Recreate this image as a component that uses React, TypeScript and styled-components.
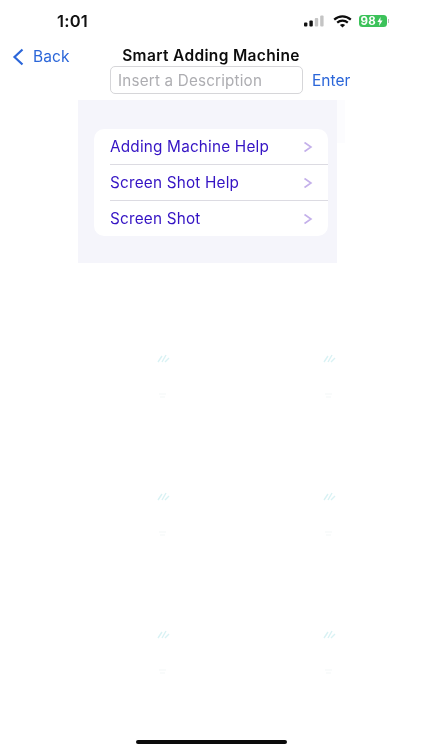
import React from "react";
import styled, { createGlobalStyle } from "styled-components";

const Global = createGlobalStyle`
  html, body { margin: 0; padding: 0; background: #fff; }
  body { font-family: "Inter", "Liberation Sans", sans-serif; }
  * { box-sizing: border-box; }
`;

const Screen = styled.div`
  width: 422px;
  height: 750px;
  position: relative;
  overflow: hidden;
  background: #fff;
  filter: blur(0.4px);
`;

const StatusBar = styled.div`
  height: 44px;
  display: flex;
  align-items: center;
  justify-content: space-between;
  padding: 0 33px 2px 57px;
`;

const Time = styled.div`
  font-size: 16.5px;
  font-weight: 600;
  letter-spacing: 0.2px;
  color: #111;
`;

const StatusIcons = styled.div`
  display: flex;
  align-items: center;
  gap: 7px;
`;

const BatteryWrap = styled.div`
  display: flex;
  align-items: center;
  gap: 1px;
`;

const Battery = styled.div`
  width: 28px;
  height: 12px;
  border-radius: 3.5px;
  background: #3cc25a;
  color: #fff;
  font-size: 11.5px;
  font-weight: 700;
  letter-spacing: 0.3px;
  line-height: 12px;
  padding-left: 2px;
  display: flex;
  align-items: center;
  gap: 1px;
`;

const BatteryCap = styled.div`
  width: 1.5px;
  height: 4px;
  background: #b9b9b9;
`;

const NavBar = styled.div`
  height: 22px;
  position: relative;
  display: flex;
  align-items: center;
  justify-content: center;
  padding-top: 1px;
`;

const BackButton = styled.div`
  position: absolute;
  left: 12px;
  top: 2px;
  height: 21px;
  display: flex;
  align-items: center;
  gap: 9px;
  color: #2b66d9;
  font-size: 15.5px;
  letter-spacing: 0.1px;
`;

const Title = styled.div`
  font-size: 15.5px;
  font-weight: 600;
  letter-spacing: 0.35px;
  color: #0c0c0c;
`;

const InputRow = styled.div`
  display: flex;
  align-items: center;
  height: 28px;
  margin-left: 110px;
  gap: 9px;
`;

const DescInput = styled.div`
  width: 193px;
  height: 28px;
  border: 1px solid #d6d6d9;
  border-radius: 5px;
  color: #adadb1;
  font-size: 15.2px;
  letter-spacing: 0.2px;
  line-height: 27px;
  padding-left: 7px;
  white-space: nowrap;
`;

const Enter = styled.div`
  color: #2b66d9;
  font-size: 15.5px;
`;

const PanelArea = styled.div`
  position: relative;
  width: 259px;
  margin: 6px 0 0 78px;
`;

const Panel = styled.div`
  height: 163px;
  padding: 29px 9px 0 16px;
  background: #f5f5fb;
`;

const PanelEdge = styled.div`
  position: absolute;
  left: 259px;
  top: 0;
  width: 8px;
  height: 43px;
  background: #fcfcfe;
`;

const Card = styled.div`
  background: #fff;
  border-radius: 10px;
  overflow: hidden;
`;

const Row = styled.div<{ $last?: boolean }>`
  height: ${(p) => (p.$last ? 35 : 36)}px;
  margin-left: 16px;
  padding-right: 15px;
  display: flex;
  align-items: center;
  justify-content: space-between;
  color: #3413c4;
  font-size: 15.3px;
  letter-spacing: 0.2px;
  border-bottom: ${(p) => (p.$last ? "none" : "1px solid #dcdbe2")};
`;

const Mark = styled.svg<{ $x: number; $y: number }>`
  position: absolute;
  left: ${(p) => p.$x}px;
  top: ${(p) => p.$y}px;
`;

const HomeIndicator = styled.div`
  position: absolute;
  left: 136px;
  bottom: 6px;
  width: 151px;
  height: 4px;
  border-radius: 2px;
  background: #0b0b0b;
`;

const Chevron = () => (
  <svg width="9" height="12" viewBox="0 0 9 12" fill="none">
    <path d="M0.5 1.5 L7 6 L0.5 10.5" stroke="#c4b0ea" strokeWidth="1.6" />
  </svg>
);

const marks = [157, 323].flatMap((x) => [353, 491, 629].map((y) => ({ x, y })));

export default function App() {
  return (
    <Screen>
      <Global />
      <StatusBar>
        <Time>1:01</Time>
        <StatusIcons>
          <svg width="22" height="12" viewBox="0 0 22 12">
            <rect x="0" y="7.5" width="3.4" height="4" rx="1" fill="#111" />
            <rect x="5.4" y="5.5" width="3.4" height="6" rx="1" fill="#111" />
            <rect x="10.8" y="3" width="3.4" height="8.5" rx="1" fill="#c4c4c4" />
            <rect x="16.2" y="0.5" width="3.4" height="11" rx="1" fill="#c4c4c4" />
          </svg>
          <svg width="19" height="13" viewBox="0 0 19 13" fill="none" stroke="#0c0c0c" strokeWidth="2.2">
            <path d="M1.2 4.6 C6 0.2 13 0.2 17.8 4.6" />
            <path d="M4.2 7.6 C7.2 5 11.8 5 14.8 7.6" />
            <path d="M9.5 12.4 L6.9 9.9 C8.4 8.8 10.6 8.8 12.1 9.9 Z" fill="#0c0c0c" stroke="none" />
          </svg>
          <BatteryWrap>
            <Battery>
              98
              <svg width="6" height="9" viewBox="0 0 6 9">
                <path d="M3.6 0 L0.4 5 H2.6 L2 9 L5.6 3.6 H3.3 Z" fill="#fff" />
              </svg>
            </Battery>
            <BatteryCap />
          </BatteryWrap>
        </StatusIcons>
      </StatusBar>
      <NavBar>
        <BackButton>
          <svg width="12" height="18" viewBox="0 0 12 18" fill="none">
            <path d="M10.5 1.5 L2.5 9 L10.5 16.5" stroke="#2b66d9" strokeWidth="2.2" />
          </svg>
          Back
        </BackButton>
        <Title>Smart Adding Machine</Title>
      </NavBar>
      <InputRow>
        <DescInput>Insert a Description</DescInput>
        <Enter>Enter</Enter>
      </InputRow>
      <PanelArea>
        <Panel>
          <Card>
            <Row>Adding Machine Help<Chevron /></Row>
            <Row>Screen Shot Help<Chevron /></Row>
            <Row $last>Screen Shot<Chevron /></Row>
          </Card>
        </Panel>
        <PanelEdge />
      </PanelArea>
      {marks.map((m) => (
        <Mark key={`${m.x}-${m.y}`} $x={m.x} $y={m.y} width="13" height="46" viewBox="0 0 13 46" fill="none" stroke="#d9f2f4" strokeWidth="1.4">
          <path d="M1 9 L5 3 M5 9 L9 2 M8 9 L12 5" />
          <path d="M2 41 H9 M3 44 H8" stroke="#f8fafa" />
        </Mark>
      ))}
      <HomeIndicator />
    </Screen>
  );
}
